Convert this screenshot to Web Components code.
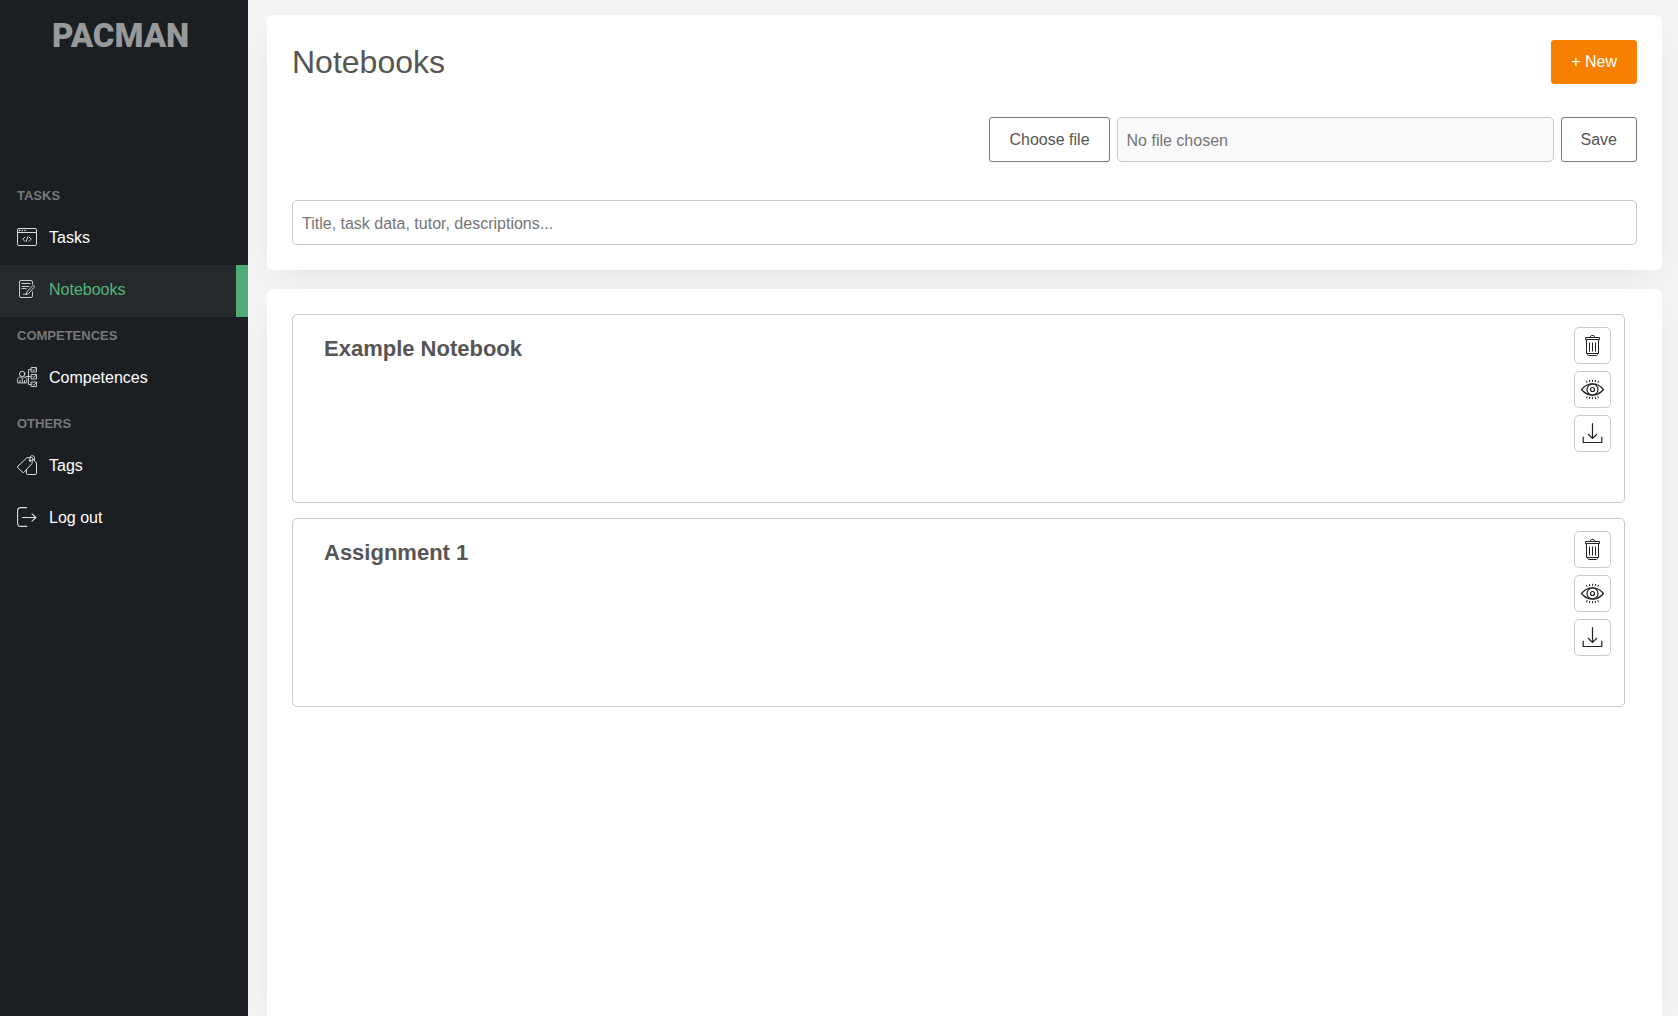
<!DOCTYPE html>
<html lang="en">
<head>
<meta charset="utf-8">
<meta name="viewport" content="width=device-width, initial-scale=1">
<title>Notebooks</title>
<style>
  html, body { margin: 0; background: #f5f5f6; }
  body { font: 16px/20px "Liberation Sans", Arial, sans-serif; color: #555; }
</style>
</head>
<body>
<pm-app>
  <pm-sidebar slot="side">
    <pm-group label="TASKS">
      <pm-link icon="tasks">Tasks</pm-link>
      <pm-link icon="notebook" active>Notebooks</pm-link>
    </pm-group>
    <pm-group label="COMPETENCES">
      <pm-link icon="competences">Competences</pm-link>
    </pm-group>
    <pm-group label="OTHERS">
      <pm-link icon="tags">Tags</pm-link>
      <pm-link icon="logout">Log out</pm-link>
    </pm-group>
  </pm-sidebar>
  <pm-toolbar heading="Notebooks"></pm-toolbar>
  <pm-list>
    <pm-notebook>Example Notebook</pm-notebook>
    <pm-notebook>Assignment 1</pm-notebook>
  </pm-list>
</pm-app>

<script>
const svg = (size, body) =>
  `<svg width="${size}" height="${size}" viewBox="0 0 ${size} ${size}" fill="none" stroke="currentColor" stroke-linecap="round" stroke-linejoin="round" aria-hidden="true">${body}</svg>`;

const icons = {
  tasks: svg(20, `<rect x=".5" y="1.5" width="19" height="17" rx="1.4"/><path d="M.5 5.500h19"/><path stroke-width="1.500" d="M2.500 3.500h.2M5.200 3.500h.2M7.900 3.500h.2"/><path d="M7.800 10.200 5.800 12.200l2 2M12.200 10.200l2 2-2 2M10.800 9.800l-1.600 4.800"/>`),
  notebook: svg(20, `<g stroke-width=".9"><path d="M15.500 13v4a1.500 1.500 0 0 1-1.500 1.500H4A1.500 1.500 0 0 1 2.500 17V3A1.500 1.500 0 0 1 4 1.500h10A1.500 1.500 0 0 1 15.500 3v2"/><path d="M5 4.500h8M5 7.500h7M5 9.500h4"/><path d="m9.200 15.200 1-3 5.500-5.300c1-.9 2.300.3 1.500 1.300l-5.300 6zM9.200 15.200H6.500"/></g>`),
  competences: svg(20, `<g stroke-width=".9"><circle cx="5.200" cy="6.900" r="2.700"/><path d="M.6 15.500v-3c0-1.500 1.300-2.200 3-2.700l1.600 1.600 1.600-1.600c1.700.5 3 1.200 3 2.700v3zM5.200 11.500v4M3 13.500v2M7.500 13.500v2"/><path d="M9 9.500h5M14 2.500h-2.500v15H14"/><path d="M14.500.5h5v4.500h-5zM14.500 7.500h5V12h-5zM14.500 15h5v4.500h-5z"/><path d="m15.800 2.700 1 1 2.500-2.500M15.800 9.700l1 1 2-2.300M15.800 17.200l1 1 2.500-2.500"/></g>`),
  tags: svg(20, `<path d="M.8 11.300 9.700 2.900l4.800-.5c.6 0 1 .4 1 1L15 8.500l-8 8.700c-.5.500-1.100.5-1.600 0L.8 12.700c-.4-.4-.4-1 0-1.400z"/><path d="m16.200 4.200 3.300 3.800v10.300c0 .7-.5 1.200-1.200 1.200h-7.600c-.8 0-1.200-.5-1.200-1.200v-3"/><path d="M13 6.200V3.100c0-3.300 4.500-3.300 4.500 0v2.600"/><circle cx="13" cy="5.600" r=".8"/>`),
  logout: svg(20, `<path stroke-width="1.100" d="M9.700.6H3.800C2 .6.600 1.900.6 3.700v12.600c0 1.800 1.400 3.100 3.200 3.100h5.900M5.500 10.500h13.200M15 6.800l3.900 3.700-3.900 3.700"/>`),
  trash: svg(23, `<path stroke-linecap="butt" stroke-linejoin="miter" d="M4.500 3.500h14v2h-14zM9.500 3.500v-.8c0-.7.500-1.200 1.200-1.200h1.600c.7 0 1.200.5 1.200 1.200v.8M5.500 5.500v14h12v-14M6.500 19.500c0 1.300.4 2 1.400 2h7.200c1 0 1.400-.7 1.400-2M8.500 8.500v9M11.500 8.500v9M14.500 8.500v9"/>`),
  eye: svg(23, `<path stroke-width="1.200" d="M.5 11.500C4 7.300 7.600 5.800 11.500 5.800s7.500 1.500 11 5.700c-3.500 4.200-7.100 5.700-11 5.700S4 15.700.5 11.500z"/><circle cx="11.500" cy="11.500" r="5.500" stroke-width="1.200"/><circle cx="11.500" cy="11.500" r="2" stroke-width="1.200"/><path stroke-linecap="butt" d="m5.400 2.800.8 2M8.400 2l.4 2M11.500 1.800v2M14.600 2l-.4 2M17.600 2.800l-.8 2M5.400 20.200l.8-2M8.400 21l.4-2M11.500 21.200v-2M14.600 21l-.4-2M17.600 20.200l-.8-2"/>`),
  download: svg(23, `<path stroke-width="1.200" stroke-linejoin="miter" d="M2.200 15.200v5.300h18.600v-5.300M11.500 1.500v14.800M7.500 12.500l4 4 4-4"/>`)
};

const define = (name, render) => customElements.define(name, class extends HTMLElement {
  connectedCallback() {
    if (this.shadowRoot) return;
    this.attachShadow({ mode: "open" }).innerHTML = render(this);
  }
});

define("pm-app", () => `
  <style>
    :host { display: flex; min-height: 100vh; }
    main { flex: 1; min-width: 0; box-sizing: border-box; padding: 15px 16px 0 19px; display: flex; flex-direction: column; gap: 19px; }
  </style>
  <slot name="side"></slot>
  <main><slot></slot></main>`);

define("pm-sidebar", () => `
  <style>
    :host { display: block; flex: none; width: 248px; background: #1b1e22; color: #fff; }
    header { height: 177px; box-sizing: border-box; padding: 18px 0 0 52px; font: 900 33px/36px Roboto, sans-serif; color: #98999b; }
  </style>
  <header>PACMAN</header>
  <nav><slot></slot></nav>`);

define("pm-group", el => `
  <style>
    :host { display: block; }
    h2 { margin: 0; padding: 9px 17px 7px; font-size: 13px; line-height: 20px; font-weight: 700; color: #77787a; }
  </style>
  <h2>${el.getAttribute("label")}</h2>
  <slot></slot>`);

define("pm-link", el => `
  <style>
    :host { display: block; }
    a { display: flex; align-items: center; gap: 12px; height: 52px; padding: 0 0 2px 17px; color: #fff; text-decoration: none; box-sizing: border-box; }
    svg { display: block; padding-bottom: 2px; color: #dcddde; }
    :host([active]) a { background: #26292c; color: #4fb87a; border-right: 12px solid #51ab76; }
  </style>
  <a href="#"${el.hasAttribute("active") ? ' aria-current="page"' : ""}>${icons[el.getAttribute("icon")]}<span><slot></slot></span></a>`);

define("pm-toolbar", el => `
  <style>
    :host { display: block; padding: 25px; background: #fff; border-radius: 6px; box-shadow: 0 12px 36px -10px rgba(0,0,0,.09); }
    header { display: flex; justify-content: space-between; align-items: center; margin-bottom: 33px; }
    h1 { margin: 0; font-size: 32px; line-height: 44px; font-weight: 400; }
    .file { display: flex; justify-content: flex-end; gap: 7px; margin-bottom: 38px; }
    button { height: 45px; padding: 0 19px; font: inherit; color: #555; background: #fff; border: 1px solid #777; border-radius: 3px; white-space: nowrap; }
    button.new { height: 44px; color: #fff; background: #f78000; border-color: #f78000; }
    input { display: block; box-sizing: border-box; height: 45px; padding: 2px 9px 0; font: inherit; color: #555; background: #fff; border: 1px solid #c8c9ca; border-radius: 5px; }
    input::placeholder { color: #757575; opacity: 1; }
    #name { width: 437px; background: #fafafa; }
    #search { width: 100%; }
  </style>
  <header><h1>${el.getAttribute("heading")}</h1><button class="new" type="button">+ New</button></header>
  <div class="file">
    <button type="button">Choose file</button>
    <input id="name" type="text" placeholder="No file chosen" aria-label="Chosen file" readonly>
    <button type="button">Save</button>
  </div>
  <input id="search" type="text" placeholder="Title, task data, tutor, descriptions..." aria-label="Search notebooks">`);

define("pm-list", () => `
  <style>
    :host { flex: 1; display: flex; flex-direction: column; gap: 15px; padding: 25px 37px 25px 25px; background: #fff; border-radius: 6px 6px 0 0; box-shadow: 0 12px 36px -10px rgba(0,0,0,.09); }
  </style>
  <slot></slot>`);

define("pm-notebook", () => `
  <style>
    :host { display: flex; justify-content: space-between; box-sizing: border-box; min-height: 189px; padding: 12px 13px 12px 31px; border: 1px solid #c8c9ca; border-radius: 5px; }
    h3 { margin: 0; padding-top: 9px; font-size: 22px; line-height: 26px; font-weight: 700; }
    .actions { display: flex; flex-direction: column; gap: 7px; }
    button { display: flex; align-items: center; justify-content: center; width: 37px; height: 37px; padding: 0; color: #222; background: #fff; border: 1px solid #c8c9ca; border-radius: 5px; }
    svg { display: block; }
  </style>
  <h3><slot></slot></h3>
  <div class="actions">
    <button type="button" aria-label="Delete">${icons.trash}</button>
    <button type="button" aria-label="View">${icons.eye}</button>
    <button type="button" aria-label="Download">${icons.download}</button>
  </div>`);
</script>
</body>
</html>
